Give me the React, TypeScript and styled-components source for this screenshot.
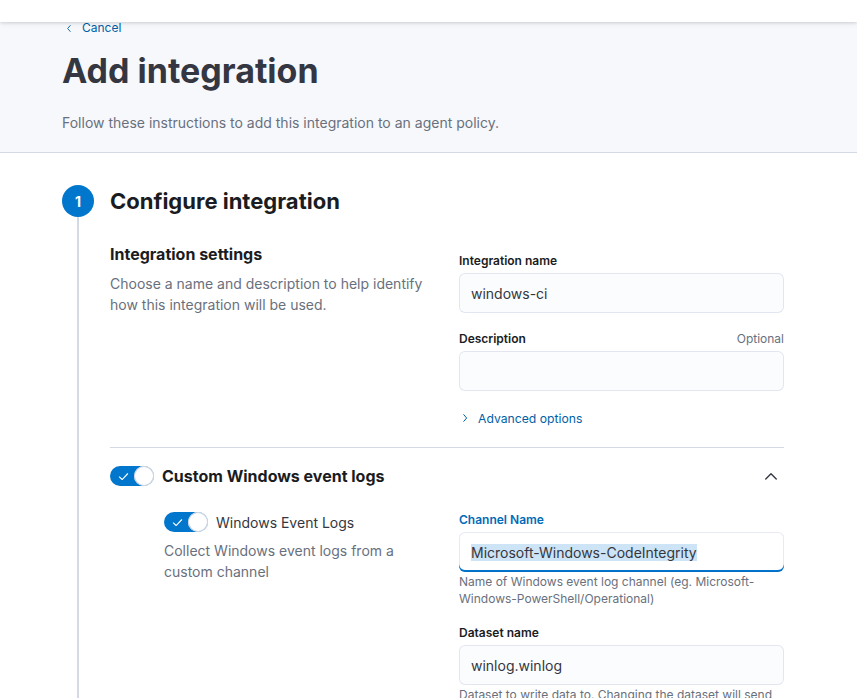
import React from 'react'
import styled, { createGlobalStyle } from 'styled-components'

const GlobalStyle = createGlobalStyle`
  html, body {
    margin: 0;
    padding: 0;
    background: #ffffff;
    font-family: Inter, 'Noto Sans', 'Liberation Sans', sans-serif;
    color: #343741;
    -webkit-font-smoothing: antialiased;
  }
  * { box-sizing: border-box; }
`

const TopBar = styled.div`
  position: relative;
  z-index: 2;
  height: 22px;
  background: #ffffff;
  box-shadow: 0 1px 3px rgba(0, 0, 0, 0.12), 0 2px 6px rgba(0, 0, 0, 0.06);
`

const Header = styled.header`
  background: #f7f8fc;
  border-bottom: 1px solid #d3dae6;
  padding: 0 62px 19px;
`

const BackLink = styled.a`
  display: flex;
  align-items: center;
  gap: 8px;
  height: 14px;
  margin-top: -1px;
  padding-left: 3px;
  font-size: 12px;
  line-height: 14px;
  color: #0061a6;
  text-decoration: none;
`

const PageTitle = styled.h1`
  margin: 16px 0 0;
  font-size: 34px;
  line-height: 40px;
  font-weight: 700;
  color: #343741;
`

const PageSubtitle = styled.p`
  margin: 21px 0 0;
  font-size: 14px;
  line-height: 21px;
  color: #69707d;
`

const Body = styled.main`
  padding: 32px 73px 0 62px;
`

const Step = styled.section`
  display: grid;
  grid-template-columns: 32px 1fr;
  column-gap: 16px;
`

const StepRail = styled.div`
  display: flex;
  flex-direction: column;
  align-items: center;
`

const StepNumber = styled.div`
  width: 32px;
  height: 32px;
  border-radius: 50%;
  background: #0077cc;
  color: #ffffff;
  font-size: 14px;
  font-weight: 700;
  display: flex;
  align-items: center;
  justify-content: center;
`

const StepLine = styled.div`
  width: 2px;
  flex: 1;
  min-height: 520px;
  background: #d3dae6;
`

const StepTitle = styled.h2`
  margin: 0;
  font-size: 22px;
  line-height: 32px;
  font-weight: 700;
  color: #1a1c21;
`

const FormRow = styled.div<{ $indent?: number; $top?: number }>`
  display: grid;
  grid-template-columns: ${({ $indent = 0 }) => `${325 - $indent}px 325px`};
  column-gap: 24px;
  margin-top: ${({ $top = 0 }) => $top}px;
  padding-left: ${({ $indent = 0 }) => $indent}px;
`

const SectionTitle = styled.h3`
  margin: 1px 0 0;
  font-size: 16px;
  line-height: 24px;
  font-weight: 700;
  color: #1a1c21;
`

const Muted = styled.p<{ $top?: number }>`
  margin: ${({ $top = 0 }) => $top}px 0 0;
  font-size: 14px;
  line-height: 21px;
  color: #69707d;
`

const Fields = styled.div<{ $top?: number }>`
  display: flex;
  flex-direction: column;
  padding-top: ${({ $top = 0 }) => $top}px;
`

const Field = styled.div`
  display: flex;
  flex-direction: column;
  & + & {
    margin-top: 18px;
  }
`

const LabelRow = styled.div`
  display: flex;
  justify-content: space-between;
  align-items: baseline;
  margin-bottom: 4px;
`

const Label = styled.label<{ $focused?: boolean }>`
  font-size: 12px;
  line-height: 16px;
  font-weight: 600;
  color: ${({ $focused }) => ($focused ? '#006bb8' : '#1a1c21')};
`

const OptionalTag = styled.span`
  font-size: 12px;
  line-height: 16px;
  color: #69707d;
`

const Input = styled.div<{ $focused?: boolean }>`
  height: 40px;
  border-radius: 6px;
  padding: 0 12px;
  display: flex;
  align-items: center;
  font-size: 14px;
  color: #343741;
  background: ${({ $focused }) => ($focused ? '#ffffff' : '#fbfcfd')};
  box-shadow: ${({ $focused }) =>
    $focused
      ? 'inset 0 0 0 1px rgba(17, 43, 134, 0.1), inset 0 -2px 0 0 #0077cc'
      : 'inset 0 0 0 1px rgba(17, 43, 134, 0.1)'};
`

const Selected = styled.span`
  background: #cce4f5;
  line-height: 17px;
`

const HelpText = styled.div`
  margin-top: 1px;
  font-size: 12px;
  line-height: 17px;
  color: #69707d;
`

const Disclosure = styled.button`
  margin-top: 17px;
  height: 20px;
  display: flex;
  align-items: center;
  gap: 8px;
  padding: 0 0 0 1px;
  border: 0;
  background: none;
  font-family: inherit;
  font-size: 12.2px;
  color: #0061a6;
  cursor: pointer;
`

const Divider = styled.hr`
  margin: 19px 0 0;
  border: 0;
  border-top: 1px solid #d3dae6;
`

const ToggleHeader = styled.div`
  display: flex;
  align-items: center;
  gap: 8px;
  height: 24px;
  margin-top: 16px;
`

const ToggleTitle = styled.span`
  flex: 1;
  font-size: 16px;
  font-weight: 700;
  color: #1a1c21;
`

const CollapseButton = styled.button`
  width: 24px;
  height: 24px;
  border: 0;
  background: none;
  padding: 0;
  display: flex;
  align-items: center;
  justify-content: center;
  color: #343741;
  margin-right: 1px;
`

const SwitchRow = styled.div`
  display: flex;
  align-items: center;
  gap: 8px;
  height: 20px;
  font-size: 14px;
  color: #343741;
`

const SwitchTrack = styled.span<{ $on?: boolean }>`
  flex: none;
  width: 44px;
  height: 20px;
  border-radius: 10px;
  background: ${({ $on }) => ($on ? '#0077cc' : '#d3dae6')};
  display: flex;
  align-items: center;
  justify-content: space-between;
  padding-left: 8px;
`

const SwitchKnob = styled.span`
  width: 20px;
  height: 20px;
  border-radius: 50%;
  background: #ffffff;
  box-shadow: inset 0 0 0 1px #c9d1de;
`

const Chevron = ({ dir, size = 10 }: { dir: 'left' | 'right' | 'up'; size?: number }) => {
  const d = {
    left: 'M7 2 L3.5 6 L7 10',
    right: 'M4.5 2 L8 6 L4.5 10',
    up: 'M1.5 8.5 L6 4 L10.5 8.5',
  }[dir]
  return (
    <svg width={size} height={size} viewBox="0 0 12 12" fill="none">
      <path d={d} stroke="currentColor" strokeWidth="1.2" strokeLinecap="round" strokeLinejoin="round" />
    </svg>
  )
}

const Switch = ({ on }: { on: boolean }) => (
  <SwitchTrack $on={on}>
    <svg width="11" height="11" viewBox="0 0 12 12" fill="none">
      <path d="M1.5 6.5 L4.5 9.3 L10.5 3" stroke="#ffffff" strokeWidth="1.2" strokeLinecap="round" strokeLinejoin="round" />
    </svg>
    <SwitchKnob />
  </SwitchTrack>
)

export default function App() {
  return (
    <>
      <GlobalStyle />
      <TopBar />
      <Header>
        <BackLink href="#">
          <Chevron dir="left" size={9} />
          Cancel
        </BackLink>
        <PageTitle>Add integration</PageTitle>
        <PageSubtitle>Follow these instructions to add this integration to an agent policy.</PageSubtitle>
      </Header>
      <Body>
        <Step>
          <StepRail>
            <StepNumber>1</StepNumber>
            <StepLine />
          </StepRail>
          <div>
            <StepTitle>Configure integration</StepTitle>

            <FormRow $top={24}>
              <div>
                <SectionTitle>Integration settings</SectionTitle>
                <Muted $top={7}>Choose a name and description to help identify how this integration will be used.</Muted>
              </div>
              <Fields $top={12}>
                <Field>
                  <LabelRow>
                    <Label>Integration name</Label>
                  </LabelRow>
                  <Input>windows-ci</Input>
                </Field>
                <Field>
                  <LabelRow>
                    <Label>Description</Label>
                    <OptionalTag>Optional</OptionalTag>
                  </LabelRow>
                  <Input />
                </Field>
                <Disclosure>
                  <Chevron dir="right" size={10} />
                  Advanced options
                </Disclosure>
              </Fields>
            </FormRow>

            <Divider />

            <ToggleHeader>
              <Switch on />
              <ToggleTitle>Custom Windows event logs</ToggleTitle>
              <CollapseButton>
                <Chevron dir="up" size={14} />
              </CollapseButton>
            </ToggleHeader>

            <FormRow $indent={54} $top={24}>
              <div>
                <SwitchRow>
                  <Switch on />
                  Windows Event Logs
                </SwitchRow>
                <Muted $top={8}>Collect Windows event logs from a custom channel</Muted>
              </div>
              <Fields>
                <Field>
                  <LabelRow>
                    <Label $focused>Channel Name</Label>
                  </LabelRow>
                  <Input $focused>
                    <Selected>Microsoft-Windows-CodeIntegrity</Selected>
                  </Input>
                  <HelpText>Name of Windows event log channel (eg. Microsoft-Windows-PowerShell/Operational)</HelpText>
                </Field>
                <Field>
                  <LabelRow>
                    <Label>Dataset name</Label>
                  </LabelRow>
                  <Input>winlog.winlog</Input>
                  <HelpText>Dataset to write data to. Changing the dataset will send the data to a different index.</HelpText>
                </Field>
              </Fields>
            </FormRow>
          </div>
        </Step>
      </Body>
    </>
  )
}
